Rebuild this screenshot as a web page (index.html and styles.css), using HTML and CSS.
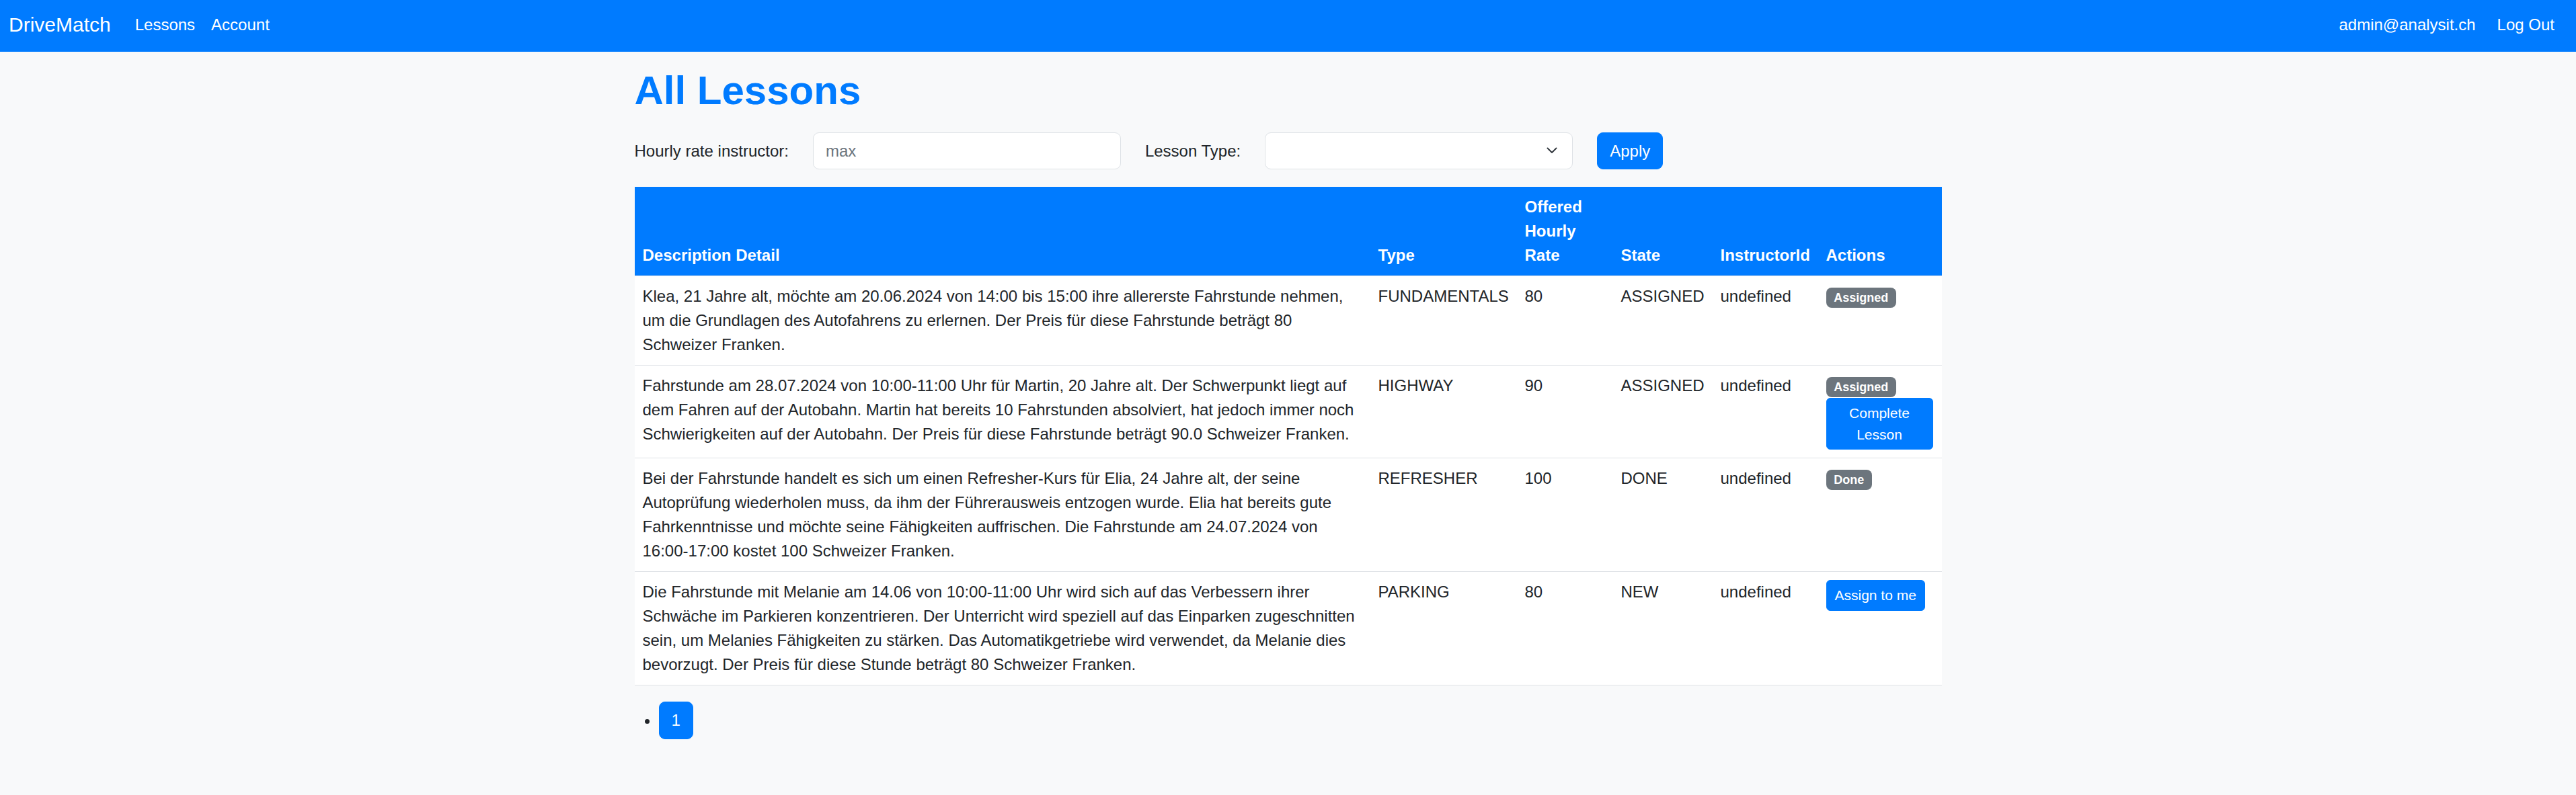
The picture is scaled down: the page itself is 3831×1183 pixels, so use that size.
FILE: index.html
```html
<!DOCTYPE html>
<html lang="de">
<head>
<meta charset="utf-8">
<title>DriveMatch - All Lessons</title>
<link rel="stylesheet" href="styles.css">
</head>
<body>
<nav class="navbar">
  <div class="nav-left">
    <a class="brand" href="#">DriveMatch</a>
    <a class="nav-link" href="#">Lessons</a>
    <a class="nav-link" href="#">Account</a>
  </div>
  <div class="nav-right">
    <span class="user">admin@analysit.ch</span>
    <a class="nav-link" href="#">Log Out</a>
  </div>
</nav>

<main class="container">
  <h1 class="title">All Lessons</h1>

  <form class="filters">
    <label class="filter-label" for="rate">Hourly rate instructor:</label>
    <input class="form-control" id="rate" type="text" placeholder="max">
    <label class="filter-label" for="type">Lesson Type:</label>
    <div class="select-wrap">
      <select class="form-select" id="type"><option></option></select>
      <svg class="chevron" width="16" height="10" viewBox="0 0 16 10" aria-hidden="true"><path d="M1.5 1.5L8 8l6.5-6.5" fill="none" stroke="#343a40" stroke-width="2" stroke-linecap="round" stroke-linejoin="round"/></svg>
    </div>
    <button class="btn btn-apply" type="button">Apply</button>
  </form>

  <table class="lessons">
    <colgroup>
      <col class="c-desc"><col class="c-type"><col class="c-rate"><col class="c-state"><col class="c-instr"><col class="c-actions">
    </colgroup>
    <thead>
      <tr>
        <th class="nowrap">Description Detail</th>
        <th class="nowrap">Type</th>
        <th>Offered Hourly Rate</th>
        <th class="nowrap">State</th>
        <th class="nowrap">InstructorId</th>
        <th class="nowrap">Actions</th>
      </tr>
    </thead>
    <tbody>
      <tr>
        <td>Klea, 21 Jahre alt, möchte am 20.06.2024 von 14:00 bis 15:00 ihre allererste Fahrstunde nehmen, um die Grundlagen des Autofahrens zu erlernen. Der Preis für diese Fahrstunde beträgt 80 Schweizer Franken.</td>
        <td class="nowrap">FUNDAMENTALS</td>
        <td class="nowrap">80</td>
        <td class="nowrap">ASSIGNED</td>
        <td class="nowrap">undefined</td>
        <td><span class="badge">Assigned</span></td>
      </tr>
      <tr>
        <td>Fahrstunde am 28.07.2024 von 10:00-11:00 Uhr für Martin, 20 Jahre alt. Der Schwerpunkt liegt auf dem Fahren auf der Autobahn. Martin hat bereits 10 Fahrstunden absolviert, hat jedoch immer noch Schwierigkeiten auf der Autobahn. Der Preis für diese Fahrstunde beträgt 90.0 Schweizer Franken.</td>
        <td class="nowrap">HIGHWAY</td>
        <td class="nowrap">90</td>
        <td class="nowrap">ASSIGNED</td>
        <td class="nowrap">undefined</td>
        <td><span class="badge">Assigned</span><button class="btn btn-sm btn-block" type="button">Complete Lesson</button></td>
      </tr>
      <tr>
        <td>Bei der Fahrstunde handelt es sich um einen Refresher-Kurs für Elia, 24 Jahre alt, der seine Autoprüfung wiederholen muss, da ihm der Führerausweis entzogen wurde. Elia hat bereits gute Fahrkenntnisse und möchte seine Fähigkeiten auffrischen. Die Fahrstunde am 24.07.2024 von 16:00-17:00 kostet 100 Schweizer Franken.</td>
        <td class="nowrap">REFRESHER</td>
        <td class="nowrap">100</td>
        <td class="nowrap">DONE</td>
        <td class="nowrap">undefined</td>
        <td><span class="badge">Done</span></td>
      </tr>
      <tr>
        <td>Die Fahrstunde mit Melanie am 14.06 von 10:00-11:00 Uhr wird sich auf das Verbessern ihrer Schwäche im Parkieren konzentrieren. Der Unterricht wird speziell auf das Einparken zugeschnitten sein, um Melanies Fähigkeiten zu stärken. Das Automatikgetriebe wird verwendet, da Melanie dies bevorzugt. Der Preis für diese Stunde beträgt 80 Schweizer Franken.</td>
        <td class="nowrap">PARKING</td>
        <td class="nowrap">80</td>
        <td class="nowrap">NEW</td>
        <td class="nowrap">undefined</td>
        <td><button class="btn btn-sm btn-fit" type="button">Assign to me</button></td>
      </tr>
    </tbody>
  </table>

  <ul class="pagination">
    <li><a class="page-btn" href="#">1</a></li>
  </ul>
</main>
</body>
</html>
```

FILE: styles.css
```css
* { box-sizing: border-box; }

body {
  margin: 0;
  font-family: "Liberation Sans", Arial, sans-serif;
  font-size: 24px;
  line-height: 1.5;
  color: #212529;
  background: #f8f9fa;
}

a { text-decoration: none; }

/* Navbar */
.navbar {
  display: flex;
  justify-content: space-between;
  align-items: center;
  height: 77px;
  padding: 0 20px 4px 13px;
  background: #007bff;
  color: #fff;
}
.nav-left, .nav-right {
  display: flex;
  align-items: center;
}
.brand {
  color: #fff;
  font-size: 30px;
  line-height: 45px;
  margin-right: 24px;
}
.nav-link {
  color: #fff;
  font-size: 24px;
  line-height: 36px;
  padding: 0 12px;
}
.user {
  color: #fff;
  margin-right: 20px;
}

/* Container */
.container {
  width: 1944px;
  margin: 0 auto;
  padding-top: 22px;
}

.title {
  margin: 0 0 26px;
  font-size: 60px;
  line-height: 72px;
  font-weight: 700;
  color: #007bff;
}

/* Filters */
.filters {
  display: flex;
  align-items: center;
  gap: 36px;
  margin: 0 0 26px;
}
.filter-label {
  white-space: nowrap;
}
.form-control,
.form-select {
  width: 458px;
  height: 55px;
  padding: 9px 18px;
  font-family: inherit;
  font-size: 24px;
  line-height: 36px;
  color: #212529;
  background: #fff;
  border: 1px solid #dee2e6;
  border-radius: 9px;
}
.form-control::placeholder {
  color: #6c757d;
}
.select-wrap {
  position: relative;
  width: 458px;
  height: 55px;
}
.form-select {
  appearance: none;
  -webkit-appearance: none;
  display: block;
}
.chevron {
  position: absolute;
  right: 23px;
  top: 22px;
  pointer-events: none;
}
.btn {
  font-family: inherit;
  color: #fff;
  background: #007bff;
  border: 1px solid #007bff;
  cursor: pointer;
  text-align: center;
}
.btn-apply {
  height: 55px;
  padding: 9px 18px;
  font-size: 24px;
  line-height: 36px;
  border-radius: 9px;
}

/* Table */
.lessons {
  width: 1944px;
  border-collapse: collapse;
  table-layout: fixed;
  background: #fff;
}
.c-desc { width: 1094px; }
.c-type { width: 218px; }
.c-rate { width: 143px; }
.c-state { width: 148px; }
.c-instr { width: 157px; }
.c-actions { width: 184px; }

.lessons th {
  background: #007bff;
  color: #fff;
  font-weight: 700;
  text-align: left;
  vertical-align: bottom;
  padding: 12px;
  line-height: 36px;
  border-bottom: 1px solid #dee2e6;
}
.lessons td {
  padding: 12px;
  vertical-align: top;
  line-height: 36px;
  color: #212529;
  border-bottom: 1px solid #dee2e6;
}
.nowrap { white-space: nowrap; }

.badge {
  display: inline-block;
  padding: 6px 11.7px;
  font-size: 18px;
  font-weight: 700;
  line-height: 1;
  color: #fff;
  background: #6c757d;
  border-radius: 8px;
  vertical-align: baseline;
}
.btn-sm {
  padding: 6px 12px;
  font-size: 21px;
  line-height: 31.5px;
  border-radius: 6px;
}
.btn-block {
  display: block;
  width: 159px;
}
.btn-fit {
  display: block;
  width: fit-content;
}

/* Pagination */
.pagination {
  margin: 24px 0;
  padding-left: 36px;
}
.page-btn {
  display: inline-block;
  padding: 9px 18px;
  line-height: 36px;
  color: #fff;
  background: #007bff;
  border: 1px solid #007bff;
  border-radius: 9px;
}
```
